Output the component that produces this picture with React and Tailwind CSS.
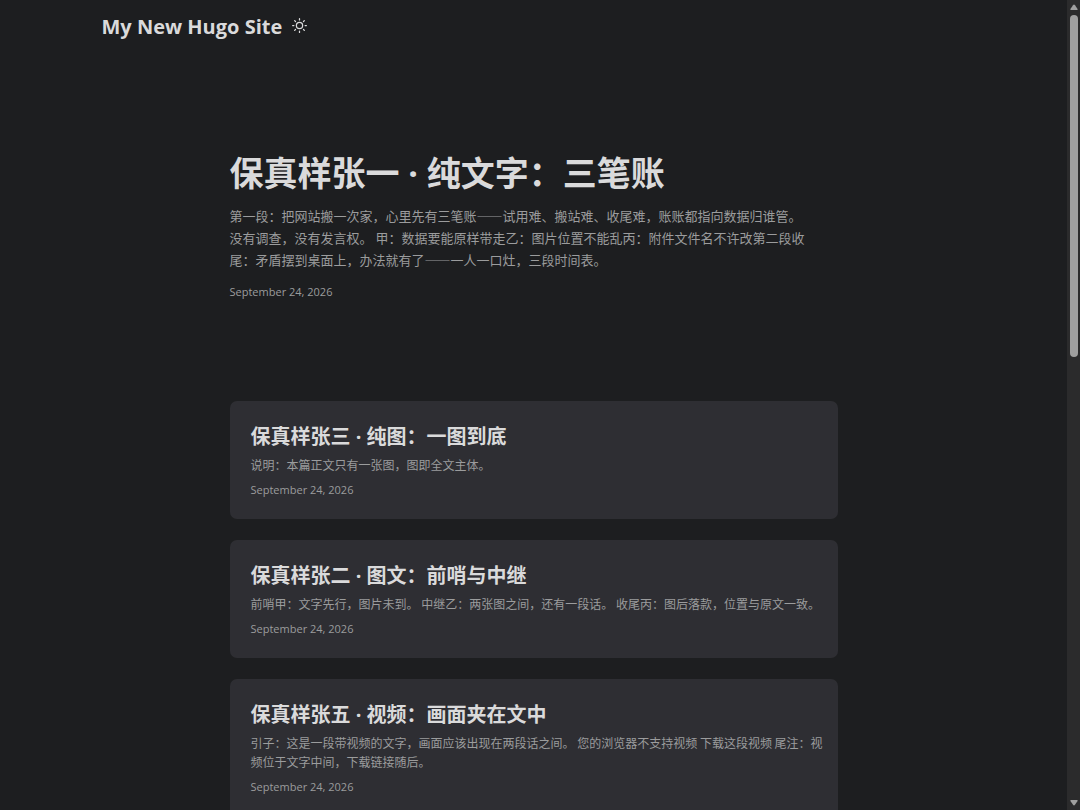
const posts = [
  {
    title: "保真样张三 · 纯图：一图到底",
    summary: "说明：本篇正文只有一张图，图即全文主体。",
    date: "September 24, 2026",
  },
  {
    title: "保真样张二 · 图文：前哨与中继",
    summary: "前哨甲：文字先行，图片未到。 中继乙：两张图之间，还有一段话。 收尾丙：图后落款，位置与原文一致。",
    date: "September 24, 2026",
  },
  {
    title: "保真样张五 · 视频：画面夹在文中",
    summary:
      "引子：这是一段带视频的文字，画面应该出现在两段话之间。 您的浏览器不支持视频 下载这段视频 尾注：视频位于文字中间，下载链接随后。",
    date: "September 24, 2026",
  },
];

function SunIcon() {
  return (
    <svg
      className="size-[15px]"
      viewBox="0 0 24 24"
      fill="none"
      stroke="currentColor"
      strokeWidth="2"
      strokeLinecap="round"
      strokeLinejoin="round"
      aria-hidden="true"
    >
      <circle cx="12" cy="12" r="5" />
      <path d="M12 1v2M12 21v2M4.22 4.22l1.42 1.42M18.36 18.36l1.42 1.42M1 12h2M21 12h2M4.22 19.78l1.42-1.42M18.36 5.64l1.42-1.42" />
    </svg>
  );
}

function Header() {
  return (
    <header className="mx-auto flex h-[53px] w-full max-w-[864px] items-center gap-2.5">
      <a href="#" className="text-[20px] font-bold leading-none">
        My New Hugo Site
      </a>
      <button type="button" aria-label="Toggle theme" className="cursor-pointer pb-0.5">
        <SunIcon />
      </button>
    </header>
  );
}

function PostCard({ post }) {
  return (
    <article className="rounded-[7px] bg-[#2e2e33] pb-5 pl-[21px] pr-2.5 pt-[22px]">
      <h2 className="text-[20px] font-bold leading-[27px]">
        <a href="#">{post.title}</a>
      </h2>
      <p className="mt-[5px] font-['Noto_Sans_CJK_SC',sans-serif] text-[12px] leading-[19px] text-[#9b9c9d]">
        {post.summary}
      </p>
      <footer className="mt-[7px] text-[11px] leading-[18px] text-[#9b9c9d]">{post.date}</footer>
    </article>
  );
}

function ScrollRail() {
  return (
    <div className="flex w-[13px] shrink-0 flex-col items-center bg-[#2b2b2c] py-1 text-[#9f9f9f]" aria-hidden="true">
      <svg className="h-[6px] w-[8px]" viewBox="0 0 8 6" fill="currentColor">
        <path d="M3 1.2Q4 0 5 1.2L7.6 5Q8 6 7 6H1Q0 6 .4 5Z" />
      </svg>
      <div className="mt-[5px] h-[342px] w-2 shrink-0 rounded-full bg-[#9f9f9f]" />
      <svg className="mt-auto h-[6px] w-[8px]" viewBox="0 0 8 6" fill="currentColor">
        <path d="M3 4.8Q4 6 5 4.8L7.6 1Q8 0 7 0H1Q0 0 .4 1Z" />
      </svg>
    </div>
  );
}

export default function App() {
  return (
    <div
      lang="zh-CN"
      className="flex h-screen overflow-hidden bg-[#1d1e20] font-['Open_Sans','Noto_Sans_CJK_SC',sans-serif] text-[#dadadb]"
    >
      <div className="min-w-0 flex-1 overflow-hidden">
        <Header />
        <main className="mx-auto w-full max-w-[608px]">
          <article className="mb-0.5 flex h-[346px] flex-col justify-center">
            <h1 className="text-[34px] font-bold leading-[44px]">保真样张一 · 纯文字：三笔账</h1>
            <p className="mt-2.5 font-['Noto_Sans_CJK_SC',sans-serif] text-[13px] leading-[22px] text-[#9b9c9d]">
              第一段：把网站搬一次家，心里先有三笔账——试用难、搬站难、收尾难，账账都指向数据归谁管。
              <br />
              没有调查，没有发言权。 甲：数据要能原样带走乙：图片位置不能乱丙：附件文件名不许改第二段收
              <br />
              尾：矛盾摆到桌面上，办法就有了——一人一口灶，三段时间表。
            </p>
            <footer className="mt-3 text-[11px] leading-[18px] text-[#9b9c9d]">September 24, 2026</footer>
          </article>
          <section className="flex flex-col gap-[21px]" aria-label="Posts">
            {posts.map((post) => (
              <PostCard key={post.title} post={post} />
            ))}
          </section>
        </main>
      </div>
      <ScrollRail />
    </div>
  );
}
